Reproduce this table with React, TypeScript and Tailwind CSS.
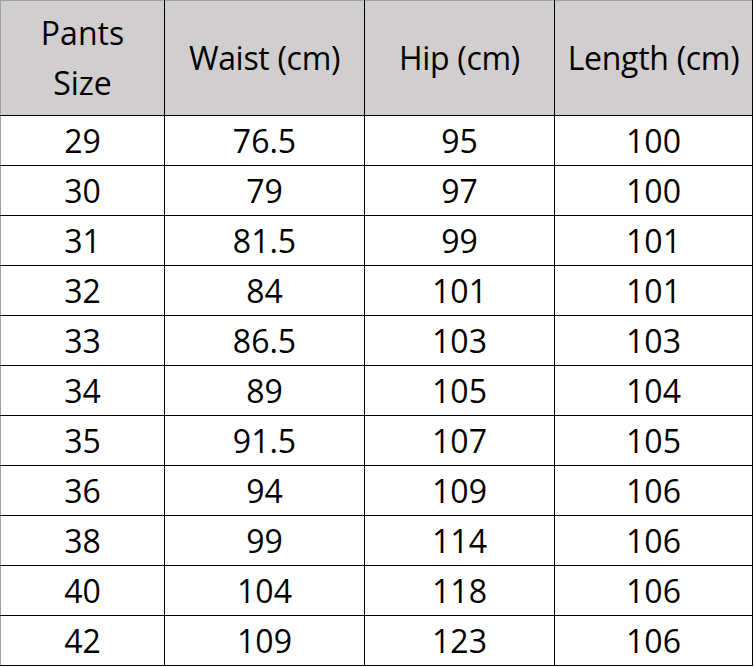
const rows: [string, string, string, string][] = [
  ['29', '76.5', '95', '100'],
  ['30', '79', '97', '100'],
  ['31', '81.5', '99', '101'],
  ['32', '84', '101', '101'],
  ['33', '86.5', '103', '103'],
  ['34', '89', '105', '104'],
  ['35', '91.5', '107', '105'],
  ['36', '94', '109', '106'],
  ['38', '99', '114', '106'],
  ['40', '104', '118', '106'],
  ['42', '109', '123', '106'],
]

export default function App() {
  return (
    <div className="bg-white w-[754px] h-[667px]">
      <table
        className="table-fixed border-collapse w-[752px] text-black text-[32px]"
        style={{ fontFamily: '"Open Sans", "Noto Sans", sans-serif' }}
      >
        <colgroup>
          <col className="w-[164px]" />
          <col className="w-[200px]" />
          <col className="w-[190px]" />
          <col className="w-[198px]" />
        </colgroup>
        <thead>
          <tr className="h-[115px] bg-[#d0cece]">
            <th className="font-normal border border-black border-t-[#a0a0a0] border-l-[#a0a0a0] leading-[50px] p-0">
              Pants
              <br />
              Size
            </th>
            <th className="font-normal border border-black border-t-[#a0a0a0] p-0 tracking-[-0.3px]">Waist (cm)</th>
            <th className="font-normal border border-black border-t-[#a0a0a0] p-0 tracking-[-0.3px]">Hip (cm)</th>
            <th className="font-normal border border-black border-t-[#a0a0a0] p-0 tracking-[-0.3px]">Length (cm)</th>
          </tr>
        </thead>
        <tbody>
          {rows.map((r) => (
            <tr key={r[0]} className="h-[50px]">
              {r.map((v, i) => (
                <td
                  key={i}
                  className={`border border-black text-center p-0 leading-none ${i === 0 ? 'border-l-[#a0a0a0]' : ''}`}
                >
                  {v}
                </td>
              ))}
            </tr>
          ))}
        </tbody>
      </table>
    </div>
  )
}
